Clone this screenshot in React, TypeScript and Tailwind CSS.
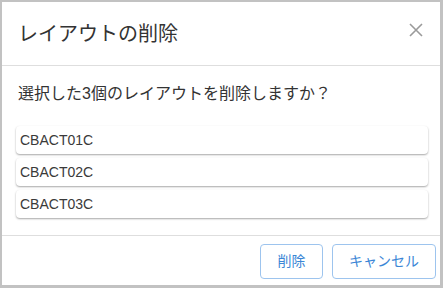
import React from "react";

const items = ["CBACT01C", "CBACT02C", "CBACT03C"];

export default function App() {
  return (
    <div
      className="w-[443px] h-[288px] bg-[#c2c2c2] pt-[2px] pl-[2px] pr-[3px] pb-[3px]"
      style={{ fontFamily: '"Liberation Sans", "Noto Sans CJK JP", sans-serif' }}
    >
      <div className="w-full h-full bg-white flex flex-col">
        <div className="h-[64px] flex items-center justify-between pl-[16px] pr-[17px] border-b border-[#dedede] shrink-0">
          <div className="text-[20px] text-[#333] leading-none">レイアウトの削除</div>
          <svg width="14" height="14" viewBox="0 0 14 14" className="mb-[7px]">
            <path d="M1 1L13 13M13 1L1 13" stroke="#9a9a9a" strokeWidth="1.6" />
          </svg>
        </div>
        <div className="flex-1 pt-[16px] flex flex-col">
          <div className="pl-[16px] text-[16px] leading-[24px] text-[#333]">
            選択した3個のレイアウトを削除しますか？
          </div>
          <div className="mt-[20px] ml-[14px] mr-[12px] flex flex-col gap-[4px]">
            {items.map((t) => (
              <div
                key={t}
                className="h-[28px] rounded-[4px] bg-white shadow-[0_1px_2px_rgba(0,0,0,0.35)] flex items-center pl-[4px] text-[14px] text-[#3a3a3a]"
              >
                {t}
              </div>
            ))}
          </div>
        </div>
        <div className="h-[50px] border-t border-[#dedede] shrink-0 flex justify-end items-start pt-[8px] pr-[4px] gap-[9px]">
          <button className="w-[63px] h-[35px] rounded-[4px] border border-[#9dc4ee] text-[#3b86d6] text-[14px] bg-white">
            削除
          </button>
          <button className="w-[104px] h-[35px] rounded-[4px] border border-[#9dc4ee] text-[#3b86d6] text-[14px] bg-white">
            キャンセル
          </button>
        </div>
      </div>
    </div>
  );
}
